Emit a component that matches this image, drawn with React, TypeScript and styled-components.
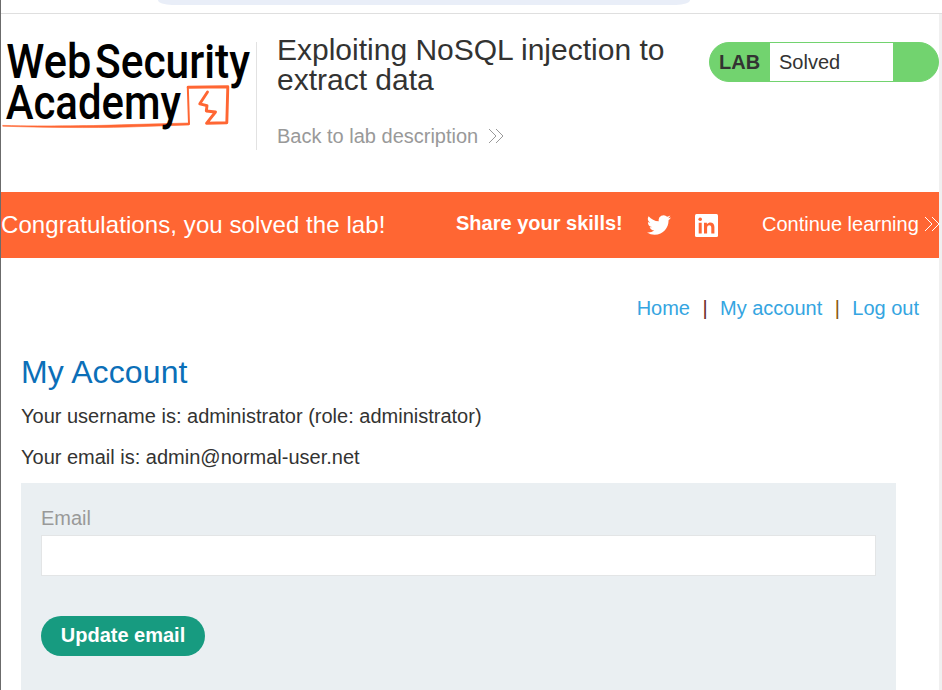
import React from "react";
import styled, { createGlobalStyle } from "styled-components";

const Global = createGlobalStyle`
  * { box-sizing: border-box; }
  html, body { margin: 0; overflow: hidden; background: #fff; }
  body { font-family: "Liberation Sans", Arial, sans-serif; font-size: 20px; color: #333332; }
  h1, h2, p { margin: 0; font-weight: 400; }
`;

const Window = styled.div`
  height: 690px;
  display: flex;
  flex-direction: column;
  border-left: 1px solid #6b6b6b;
  overflow: hidden;
`;

const BrowserBar = styled.div`
  flex: none;
  height: 14px;
  padding-left: 157px;
  border-bottom: 1px solid #dfdfdf;
`;

const AddressBar = styled.div`
  width: 532px;
  height: 5px;
  background: #e9eef8;
  border-radius: 0 0 14px 14px / 0 0 5px 5px;
`;

const Viewport = styled.div`
  flex: 1;
  min-height: 0;
  display: flex;
`;

const Page = styled.main`
  flex: 1;
  min-width: 0;
  overflow: hidden;
`;

const ScrollTrack = styled.div`
  width: 3px;
  background: #f0f0f0;
`;

const LabHeader = styled.header`
  height: 178px;
  display: flex;
  align-items: flex-start;
  padding-top: 28px;
`;

const LogoBox = styled.div`
  width: 256px;
  height: 108px;
  flex: none;
  border-right: 1px solid #e2e2e2;
  svg { display: block; overflow: visible; }
`;

const TitleBox = styled.div`
  width: 432px;
  flex: none;
  padding: 0 20px;
`;

const Title = styled.h1`
  margin-top: -7px;
  font-size: 30px;
  line-height: 30px;
  white-space: nowrap;
`;

const BackLink = styled.a`
  display: flex;
  align-items: center;
  gap: 10px;
  margin-top: 29px;
  height: 24px;
  line-height: 24px;
  color: #999;
`;

const LabStatus = styled.div`
  width: 230px;
  margin-left: 20px;
  margin-right: -1px;
  height: 40px;
  display: flex;
  flex: none;
  border: 1px solid #72d36f;
  border-radius: 20px;
  background: #72d36f;
  line-height: 38px;
`;

const LabTag = styled.span`
  width: 60px;
  padding-left: 9px;
  font-weight: 700;
  letter-spacing: 0.1px;
`;

const LabState = styled.span`
  width: 123px;
  padding-left: 9px;
  background: #fff;
`;

const Banner = styled.section`
  height: 66px;
  display: flex;
  align-items: center;
  background: #ff6633;
  color: #fff;
  white-space: nowrap;
`;

const Congrats = styled.span`
  width: 455px;
  flex: none;
  font-size: 24px;
  letter-spacing: 0.08px;
`;

const Share = styled.div`
  width: 306px;
  flex: none;
  display: flex;
  align-items: center;
  svg { display: block; }
`;

const ShareLabel = styled.span`
  width: 191px;
  margin-top: -4px;
  font-weight: 700;
`;

const Network = styled.span`
  width: 48px;
`;

const Continue = styled.a`
  display: flex;
  align-items: center;
  gap: 5px;
  margin-top: -2px;
`;

const Nav = styled.nav`
  display: flex;
  justify-content: flex-end;
  gap: 12px;
  height: 24px;
  line-height: 24px;
  margin-top: 38px;
  padding-right: 20px;
`;

const NavLink = styled.a`
  color: #35a5e1;
`;

const Divider = styled.span<{ $color: string }>`
  width: 6px;
  text-align: center;
  color: ${(p) => p.$color};
`;

const Account = styled.section`
  padding: 34px 43px 0 20px;
`;

const Heading = styled.h2`
  font-size: 32px;
  line-height: 36px;
  letter-spacing: 0.12px;
  color: #0b6fb8;
`;

const Info = styled.p<{ $top: number }>`
  height: 24px;
  line-height: 24px;
  margin-top: ${(p) => p.$top}px;
`;

const Form = styled.form`
  height: 230px;
  margin-top: 14px;
  padding: 23px 20px 0;
  background: #eaeff2;
`;

const Label = styled.label`
  display: block;
  height: 24px;
  line-height: 24px;
  color: #999;
`;

const Input = styled.input`
  display: block;
  width: 100%;
  height: 41px;
  margin-top: 5px;
  border: 1px solid #e3e5e6;
  background: #fff;
  outline: none;
`;

const SubmitButton = styled.button`
  display: block;
  width: 164px;
  height: 40px;
  margin-top: 40px;
  padding: 0 0 2px;
  border: 0;
  border-radius: 20px;
  background: #179b80;
  color: #fff;
  font: 700 20px "Liberation Sans", Arial, sans-serif;
`;

const Chevrons = () => (
  <svg width="16" height="16" viewBox="0 0 16 16" fill="none" stroke="currentColor" strokeWidth="1">
    <path d="M1 1L8 8L1 15M8 1L15 8L8 15" />
  </svg>
);

const Logo = () => (
  <svg width="254" height="100" viewBox="1 42 254 100">
    <g fill="none" stroke="#ff6633" strokeLinejoin="round" strokeLinecap="round">
      <path fill="#ff6633" strokeWidth="0.6" d="M3 125.4C50 126.4 95 125.8 128 124.6L189 123L189 125L128 127C90 128 45 127.6 3 126.2Z" />
      <path strokeWidth="2" d="M189 124L187.8 87" />
      <path strokeWidth="2.9" d="M188.2 87.2L227.8 86.8L226.8 122.8L206.5 123.3L215.5 112L206.3 111L207 105.6L199.8 103.8L207.5 92" />
    </g>
    <g fill="#000" fontFamily="Roboto, sans-serif" fontWeight="500">
      <text x="6.3" y="78.3" fontSize="48" textLength="85" lengthAdjust="spacingAndGlyphs">Web</text>
      <text x="95" y="78.3" fontSize="48" textLength="155" lengthAdjust="spacingAndGlyphs">Security</text>
      <text x="5.7" y="119" fontSize="48" textLength="175.3" lengthAdjust="spacingAndGlyphs">Academy</text>
    </g>
  </svg>
);

const Twitter = () => (
  <svg width="24" height="24" viewBox="0 0 24 24" fill="#fff">
    <path d="M23.95 4.57a10 10 0 0 1-2.82.77 4.96 4.96 0 0 0 2.16-2.72c-.95.55-2 .95-3.13 1.18a4.92 4.92 0 0 0-8.38 4.48C7.69 8.1 4.07 6.13 1.64 3.16a4.93 4.93 0 0 0 1.52 6.57 4.9 4.9 0 0 1-2.23-.61v.06a4.92 4.92 0 0 0 3.95 4.83 5 5 0 0 1-2.21.08 4.94 4.94 0 0 0 4.6 3.42A9.87 9.87 0 0 1 0 19.54a14 14 0 0 0 7.55 2.21c9.05 0 14-7.5 14-13.98 0-.21 0-.42-.02-.63a9.94 9.94 0 0 0 2.46-2.55z" />
  </svg>
);

const LinkedIn = () => (
  <svg width="23" height="23" viewBox="0 0 23 23">
    <rect width="23" height="23" rx="1.5" fill="#fff" />
    <g fill="#ff6633">
      <circle cx="5.2" cy="5.3" r="1.8" />
      <path d="M3.7 8.8H6.7V19.4H3.7zM9 8.8H11.9V10.3C14.2 7.4 19.4 8 19.4 13V19.4H16.3V13.8C16.3 10.4 12.1 10.7 12.1 13.8V19.4H9z" />
    </g>
  </svg>
);

export default function App() {
  return (
    <>
      <Global />
      <Window>
        <BrowserBar><AddressBar /></BrowserBar>
        <Viewport>
          <Page>
            <LabHeader>
              <LogoBox><Logo /></LogoBox>
              <TitleBox>
                <Title>Exploiting NoSQL injection to<br />extract data</Title>
                <BackLink>Back to lab description <Chevrons /></BackLink>
              </TitleBox>
              <LabStatus>
                <LabTag>LAB</LabTag>
                <LabState>Solved</LabState>
              </LabStatus>
            </LabHeader>
            <Banner>
              <Congrats>Congratulations, you solved the lab!</Congrats>
              <Share>
                <ShareLabel>Share your skills!</ShareLabel>
                <Network><Twitter /></Network>
                <Network><LinkedIn /></Network>
              </Share>
              <Continue>Continue learning <Chevrons /></Continue>
            </Banner>
            <Nav>
              <NavLink>Home</NavLink>
              <Divider $color="#6b2a2a">|</Divider>
              <NavLink>My account</NavLink>
              <Divider $color="#8a5a10">|</Divider>
              <NavLink>Log out</NavLink>
            </Nav>
            <Account>
              <Heading>My Account</Heading>
              <Info $top={14}>Your username is: administrator (role: administrator)</Info>
              <Info $top={17}>Your email is: admin@normal-user.net</Info>
              <Form>
                <Label htmlFor="email">Email</Label>
                <Input id="email" type="email" />
                <SubmitButton type="button">Update email</SubmitButton>
              </Form>
            </Account>
          </Page>
          <ScrollTrack />
        </Viewport>
      </Window>
    </>
  );
}
